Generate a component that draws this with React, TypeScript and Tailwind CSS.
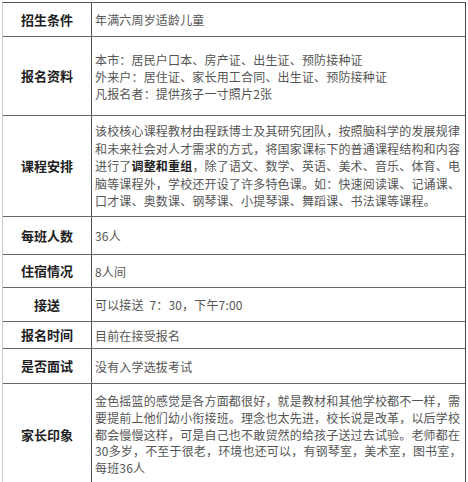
import React from "react";

type Row = { label: string; h: string; lines: React.ReactNode[]; leading?: string };

const rows: Row[] = [
  { label: "招生条件", h: "h-[34px]", lines: ["年满六周岁适龄儿童"] },
  {
    label: "报名资料",
    h: "h-[79px]",
    lines: [
      "本市：居民户口本、房产证、出生证、预防接种证",
      "外来户：居住证、家长用工合同、出生证、预防接种证",
      "凡报名者：提供孩子一寸照片2张",
    ],
  },
  {
    label: "课程安排",
    h: "h-[101px]",
    leading: "leading-[17.5px]",
    lines: [
      "该校核心课程教材由程跃博士及其研究团队，按照脑科学的发展规律",
      "和未来社会对人才需求的方式，将国家课标下的普通课程结构和内容",
      <>
        进行了<b className="font-bold text-[#222]">调整和重组</b>，除了语文、数学、英语、美术、音乐、体育、电
      </>,
      "脑等课程外，学校还开设了许多特色课。如：快速阅读课、记诵课、",
      "口才课、奥数课、钢琴课、小提琴课、舞蹈课、书法课等课程。",
    ],
  },
  { label: "每班人数", h: "h-[38px]", lines: ["36人"] },
  { label: "住宿情况", h: "h-[33px]", lines: ["8人间"] },
  { label: "接送", h: "h-[34px]", lines: ["可以接送  7：30，下午7:00"] },
  { label: "报名时间", h: "h-[27px]", lines: ["目前在接受报名"] },
  { label: "是否面试", h: "h-[35px]", lines: ["没有入学选拔考试"] },
  {
    label: "家长印象",
    h: "h-[102px]",
    leading: "leading-[16.8px]",
    lines: [
      "金色摇篮的感觉是各方面都很好，就是教材和其他学校都不一样，需",
      "要提前上他们幼小衔接班。理念也太先进，校长说是改革，以后学校",
      "都会慢慢这样，可是自己也不敢贸然的给孩子送过去试验。老师都在",
      "30多岁，不至于很老，环境也还可以，有钢琴室，美术室，图书室，",
      "每班36人",
    ],
  },
];

const App = () => {
  return (
    <div
      className="w-[468px] h-[482px] overflow-hidden bg-white pt-[2px] pl-[2px]"
      style={{ fontFamily: '"Noto Sans CJK SC", "Noto Sans", sans-serif' }}
    >
      <div className="w-[464px] border-t border-t-[#555] border-r border-r-[#444] border-l border-l-[#c8c8c8]">
        {rows.map((row, i) => (
          <div
            key={row.label}
            className={`flex ${row.h} ${i < rows.length - 1 ? "border-b border-b-[#666]" : ""}`}
          >
            <div className="w-[89px] shrink-0 flex items-center justify-center border-r border-r-[#555] text-[13px] font-bold text-[#1e1e1e]">
              {row.label}
            </div>
            <div
              className={`flex-1 flex flex-col justify-center pl-[3px] text-[12px] tracking-[0.17px] text-[#555] whitespace-pre ${row.leading ?? "leading-[17px]"}`}
            >
              {row.lines.map((l, j) => (
                <div key={j}>{l}</div>
              ))}
            </div>
          </div>
        ))}
      </div>
    </div>
  );
};

export default App;
